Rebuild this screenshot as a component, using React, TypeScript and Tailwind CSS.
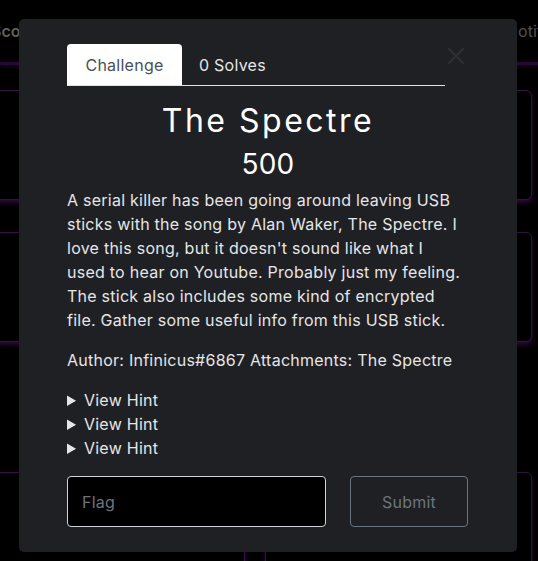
import React, { useState } from "react";

const hints = ["View Hint", "View Hint", "View Hint"];

const descLines = [
  "A serial killer has been going around leaving USB",
  "sticks with the song by Alan Waker, The Spectre. I",
  "love this song, but it doesn't sound like what I",
  "used to hear on Youtube. Probably just my feeling.",
  "The stick also includes some kind of encrypted",
  "file. Gather some useful info from this USB stick.",
];

const Card: React.FC<{ className?: string }> = ({ className = "" }) => (
  <div
    className={`h-[110px] rounded-md border border-[#35123f] bg-black shadow-[0_3px_5px_#2b0a37] ${className}`}
  />
);

const ChallengeModal: React.FC = () => {
  const [tab, setTab] = useState("challenge");
  const [flag, setFlag] = useState("");

  return (
    <div className="absolute left-[19px] top-[19px] w-[498px] rounded-[5px] bg-[#1f2024] px-12 pt-[25px] pb-[25px] text-[#e6e6e7] tracking-[0.25px]">
      <div className="flex items-start">
        <div className="flex w-[378px] border-b border-[#dee2e6]">
          <button
            onClick={() => setTab("challenge")}
            className="-mb-px h-[41px] w-[115px] rounded-t-[4px] bg-white text-[16px] text-[#495057]"
          >
            Challenge
          </button>
          <button
            onClick={() => setTab("solves")}
            className="h-[41px] px-[17px] text-[16px] text-[#e6e6e7]"
          >
            0 Solves
          </button>
        </div>
        <button className="ml-auto mt-[3px] mr-[4px] p-0" aria-label="Close">
          <svg width="18" height="18" viewBox="0 0 18 18">
            <path d="M1 1L17 17M17 1L1 17" stroke="#2f3034" strokeWidth="2" />
          </svg>
        </button>
      </div>

      {tab === "challenge" && (
        <>
          <h2 className="mt-[15px] text-center text-[32px] leading-[40px] tracking-[2.5px] text-white">
            The Spectre
          </h2>
          <h3 className="mt-[6px] text-center text-[28px] leading-[34px] font-normal text-white">
            500
          </h3>
          <p className="mt-[7px] text-[16px] leading-[24px] whitespace-nowrap">
            {descLines.map((l, i) => (
              <React.Fragment key={i}>
                {l}
                {i < descLines.length - 1 && <br />}
              </React.Fragment>
            ))}
          </p>
          <p className="mt-[16px] text-[16px] leading-[24px]">
            Author: Infinicus#6867 Attachments: The Spectre
          </p>
          <div className="mt-[16px]">
            {hints.map((h, i) => (
              <details key={i} className="text-[16px] leading-[24px]">
                <summary className="cursor-pointer">{h}</summary>
              </details>
            ))}
          </div>
          <div className="mt-[16px] flex gap-6">
            <input
              value={flag}
              onChange={(e) => setFlag(e.target.value)}
              placeholder="Flag"
              className="h-[51px] w-[259px] rounded-[4px] border border-[#ced4da] bg-black px-[14px] text-[16px] text-white outline-none placeholder:text-[#6c757d]"
            />
            <button className="h-[51px] w-[118px] rounded-[4px] border border-[#6c757d] text-[16px] text-[#6c757d]">
              Submit
            </button>
          </div>
        </>
      )}
    </div>
  );
};

export default function App() {
  return (
    <div
      className="relative h-[561px] w-[538px] overflow-hidden bg-black"
      style={{ fontFamily: "Inter, 'DejaVu Sans', sans-serif" }}
    >
      <nav className="flex h-[62px] items-center text-[16px]">
        <div className="-ml-[9px] w-[515px] shrink-0 font-semibold text-[#5e5e5e]">
          Scoreboard
        </div>
        <div className="shrink-0 text-[#505050]">Notifications</div>
      </nav>
      <div className="h-[3px] bg-[#240a2f] shadow-[0_1px_4px_#2b0a37]" />
      <div className="grid grid-cols-[260px_267px] gap-x-5 gap-y-8 pt-[25px] -ml-[15px]">
        <Card />
        <Card />
        <Card />
        <Card />
        <Card className="mt-[98px]" />
        <Card className="mt-[98px]" />
      </div>
      <ChallengeModal />
    </div>
  );
}
